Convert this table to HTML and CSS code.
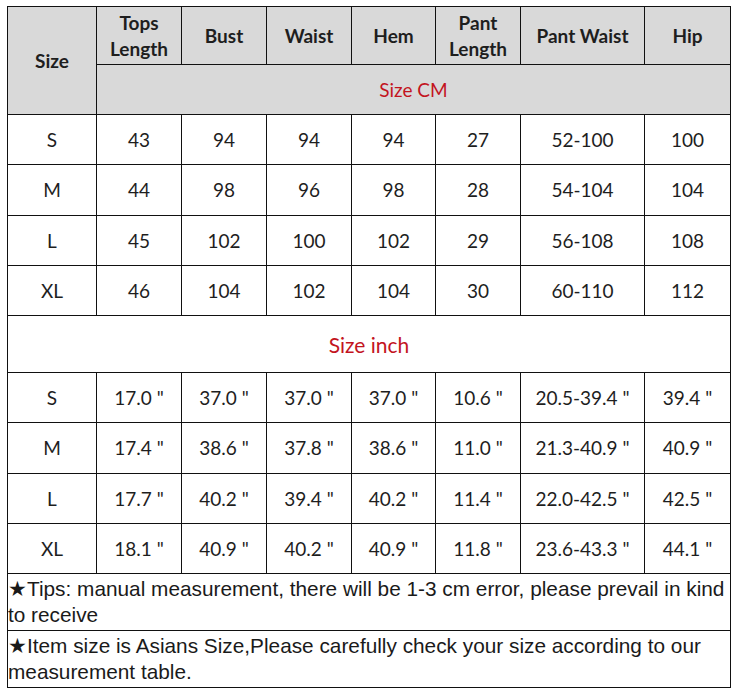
FILE: index.html
```html
<!DOCTYPE html>
<html>
<head>
<meta charset="utf-8">
<link rel="stylesheet" href="styles.css">
</head>
<body>
<table class="chart">
  <colgroup>
    <col class="c-size"><col class="c-n"><col class="c-n"><col class="c-n"><col class="c-hem"><col class="c-n"><col class="c-pw"><col class="c-hip">
  </colgroup>
  <tr class="h1">
    <th rowspan="2" class="gray">Size</th>
    <th class="gray">Tops<br>Length</th>
    <th class="gray">Bust</th>
    <th class="gray">Waist</th>
    <th class="gray">Hem</th>
    <th class="gray">Pant<br>Length</th>
    <th class="gray">Pant Waist</th>
    <th class="gray">Hip</th>
  </tr>
  <tr class="h2">
    <td colspan="7" class="gray unit">Size CM</td>
  </tr>
  <tr class="r"><td>S</td><td>43</td><td>94</td><td>94</td><td>94</td><td>27</td><td>52-100</td><td>100</td></tr>
  <tr class="r"><td>M</td><td>44</td><td>98</td><td>96</td><td>98</td><td>28</td><td>54-104</td><td>104</td></tr>
  <tr class="r"><td>L</td><td>45</td><td>102</td><td>100</td><td>102</td><td>29</td><td>56-108</td><td>108</td></tr>
  <tr class="r"><td>XL</td><td>46</td><td>104</td><td>102</td><td>104</td><td>30</td><td>60-110</td><td>112</td></tr>
  <tr class="h3">
    <td colspan="8" class="unit big">Size inch</td>
  </tr>
  <tr class="r"><td>S</td><td>17.0 "</td><td>37.0 "</td><td>37.0 "</td><td>37.0 "</td><td>10.6 "</td><td>20.5-39.4 "</td><td>39.4 "</td></tr>
  <tr class="r"><td>M</td><td>17.4 "</td><td>38.6 "</td><td>37.8 "</td><td>38.6 "</td><td>11.0 "</td><td>21.3-40.9 "</td><td>40.9 "</td></tr>
  <tr class="r"><td>L</td><td>17.7 "</td><td>40.2 "</td><td>39.4 "</td><td>40.2 "</td><td>11.4 "</td><td>22.0-42.5 "</td><td>42.5 "</td></tr>
  <tr class="r"><td>XL</td><td>18.1 "</td><td>40.9 "</td><td>40.2 "</td><td>40.9 "</td><td>11.8 "</td><td>23.6-43.3 "</td><td>44.1 "</td></tr>
  <tr class="note"><td colspan="8">★Tips: manual measurement, there will be 1-3 cm error, please prevail in kind to receive</td></tr>
  <tr class="note"><td colspan="8">★Item size is Asians Size,Please carefully check your size according to our measurement table.</td></tr>
</table>
</body>
</html>
```
FILE: styles.css
```css
html, body {
  margin: 0;
  padding: 0;
  background: #ffffff;
}
body {
  padding: 6px 0 0 7px;
}
.chart {
  border-collapse: collapse;
  table-layout: fixed;
  width: 724px;
  font-family: Lato, "Open Sans", sans-serif;
  color: #1e1e1e;
  font-size: 19px;
}
.c-size { width: 89px; }
.c-n { width: 85px; }
.c-hem { width: 84px; }
.c-pw { width: 124px; }
.c-hip { width: 86px; }
.chart th, .chart td {
  border: 1px solid #111;
  text-align: center;
  vertical-align: middle;
  padding: 0;
}
.chart th {
  font-weight: bold;
  line-height: 26px;
}
.gray { background: #d9d9d9; }
.h1 { height: 58px; }
.h2 { height: 50px; }
.r { height: 50.25px; }
.h3 { height: 57px; }
.unit {
  color: #c3141e;
  font-size: 19px;
}
.unit.big { font-size: 21px; }
.note { height: 57px; }
.note td {
  text-align: left;
  font-family: "Liberation Sans", Arial, sans-serif;
  font-size: 20.8px;
  line-height: 26px;
  color: #1a1a1a;
  padding: 2px 0 2px 0;
}
```
